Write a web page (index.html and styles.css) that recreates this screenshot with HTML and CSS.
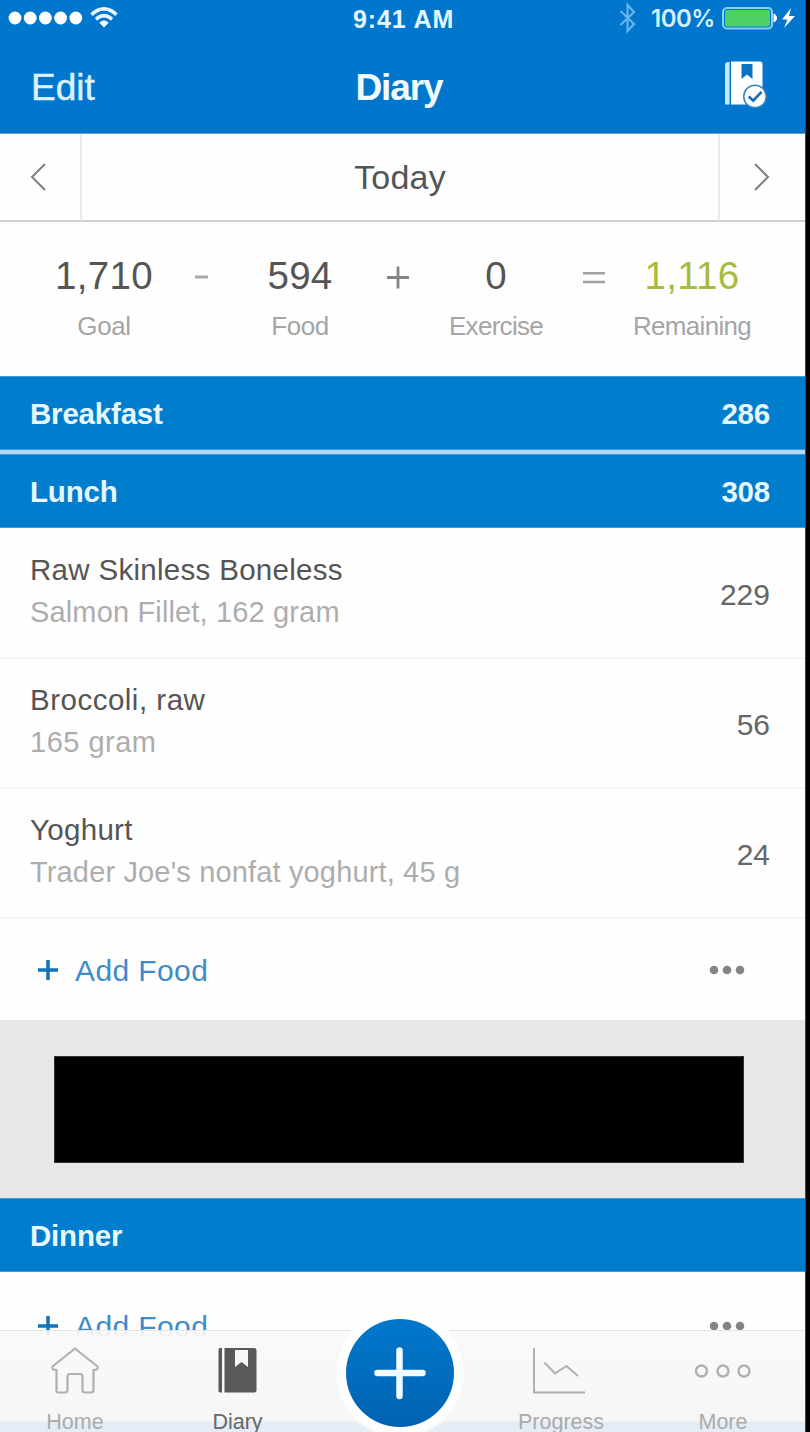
FILE: index.html
```html
<!DOCTYPE html>
<html lang="en">
<head>
<meta charset="utf-8">
<title>Diary</title>
<link rel="stylesheet" href="styles.css">
</head>
<body>
<div class="phone">
  <header class="top">
    <div class="status">
      <div class="signal">
        <svg width="76" height="36" viewBox="0 0 76 36" fill="#fff"><circle cx="8" cy="18" r="6.4"/><circle cx="23.2" cy="18" r="6.4"/><circle cx="38.4" cy="18" r="6.4"/><circle cx="53.6" cy="18" r="6.4"/><circle cx="68.8" cy="18" r="6.4"/></svg>
        <svg class="wifi" width="28" height="36" viewBox="0 0 28 36" fill="none" stroke="#e6f5ff" stroke-width="3.6"><path d="M1.500 14.600Q14 3.200 26.500 14.600"/><path d="M6 19.300Q14 12 22 19.300"/><path d="M14 27.500L9.300 22.800Q14 18.200 18.700 22.800Z" fill="#fff" stroke="none"/></svg>
      </div>
      <div class="clock">9:41 AM</div>
      <div class="power">
        <svg width="18" height="36" viewBox="0 0 18 36" fill="none" stroke="#68b5ea" stroke-width="2.100"><path d="M1.500 11L15 24L8.500 31V5L15 12L1.500 25"/></svg>
        <span class="percent">100%</span>
        <svg class="battery" width="74" height="36" viewBox="0 0 74 36"><rect x="1" y="8" width="49" height="20.500" rx="4" fill="#0077cc" stroke="#8bd0f2" stroke-width="2"/><rect x="3" y="10" width="45" height="16.500" rx="2" fill="#4cd068"/><path d="M51.500 13.500Q55 15 55 18T51.500 22.500Z" fill="#fff"/><path d="M69 8L60 19.500H65.500L62 28L73 16H67Z" fill="#fff"/></svg>
      </div>
    </div>
    <div class="nav">
      <span class="edit">Edit</span>
      <span class="title">Diary</span>
      <svg class="complete" width="44" height="50" viewBox="0 0 44 50"><path d="M3 2Q1 2.500 1 4.500V44.500H5.500V2Z" fill="#c4eaff"/><path d="M7 1.500H36Q38.500 1.500 38.500 4V44.500H7Z" fill="#fff"/><path d="M17.500 4H28.500V19L23 14.500L17.500 19Z" fill="#0873c2"/><circle cx="31" cy="36.500" r="12" fill="#2e83bd"/><circle cx="31" cy="36.500" r="10.500" fill="#fff"/><path d="M24.700 36.500L29.300 40.700L37.500 31.800" fill="none" stroke="#176eb0" stroke-width="2.700"/></svg>
    </div>
  </header>

  <div class="datebar">
    <div class="prev"><svg width="16" height="28" viewBox="0 0 16 28"><path d="M15 1L2 14L15 27"/></svg></div>
    <div class="day">Today</div>
    <div class="next"><svg width="16" height="28" viewBox="0 0 16 28"><path d="M1 1L14 14L1 27"/></svg></div>
  </div>

  <section class="summary">
    <div class="stat"><div class="num">1,710</div><div class="cap">Goal</div></div>
    <svg class="op" width="24" height="24" viewBox="0 0 24 24" stroke="#a8a8a8" stroke-width="3"><path d="M5 12H18"/></svg>
    <div class="stat"><div class="num">594</div><div class="cap">Food</div></div>
    <svg class="op" width="24" height="24" viewBox="0 0 24 24" stroke="#858585" stroke-width="2.800"><path d="M1 12.500H23M12 1.500V23.500"/></svg>
    <div class="stat"><div class="num">0</div><div class="cap tight">Exercise</div></div>
    <svg class="op" width="24" height="24" viewBox="0 0 24 24" stroke="#a0a0a0" stroke-width="2.600"><path d="M1 8.300H23M1 17H23"/></svg>
    <div class="stat"><div class="num left">1,116</div><div class="cap tight">Remaining</div></div>
  </section>

  <div class="meal"><span>Breakfast</span><span>286</span></div>
  <div class="seam"></div>
  <div class="meal"><span>Lunch</span><span>308</span></div>
  <div class="item first"><div class="food"><div class="name">Raw Skinless Boneless</div><div class="detail">Salmon Fillet, 162 gram</div></div><div class="kcal">229</div></div>
  <div class="item"><div class="food"><div class="name wide">Broccoli, raw</div><div class="detail wide">165 gram</div></div><div class="kcal">56</div></div>
  <div class="item"><div class="food"><div class="name">Yoghurt</div><div class="detail">Trader Joe's nonfat yoghurt, 45 g</div></div><div class="kcal">24</div></div>
  <div class="add">
    <svg width="22" height="22" viewBox="0 0 22 22" stroke="#1373bd" stroke-width="3.600"><path d="M1 11H21M11 1V21"/></svg>
    <span>Add Food</span>
    <svg class="dots" width="36" height="12" viewBox="0 0 36 12" fill="#858585"><circle cx="5" cy="6" r="4.300"/><circle cx="18" cy="6" r="4.300"/><circle cx="31" cy="6" r="4.300"/></svg>
  </div>
  <div class="banner"><div class="ad"></div></div>
  <div class="meal"><span>Dinner</span></div>
  <div class="add second">
    <svg width="22" height="22" viewBox="0 0 22 22" stroke="#1373bd" stroke-width="3.600"><path d="M1 11H21M11 1V21"/></svg>
    <span>Add Food</span>
    <svg class="dots" width="36" height="12" viewBox="0 0 36 12" fill="#858585"><circle cx="5" cy="6" r="4.300"/><circle cx="18" cy="6" r="4.300"/><circle cx="31" cy="6" r="4.300"/></svg>
  </div>

  <nav class="tabs">
    <div class="tab"><svg width="52" height="50" viewBox="0 0 52 50" fill="none" stroke="#b0b0b0" stroke-width="2.200" stroke-linejoin="round"><path d="M26 2.500L3.500 20.500Q2 24 7.500 24V44.500Q7.500 46.500 9.500 46.500H16Q18.500 46.500 18.500 44V31Q18.500 28 21 28H31Q33.500 28 33.500 31V44Q33.500 46.500 36 46.500H42Q44.500 46.500 44.500 44V24Q50 24 48.500 20.500Z"/></svg><span>Home</span></div>
    <div class="tab active"><svg width="40" height="50" viewBox="0 0 40 50" fill="#595959"><path d="M2 2H4V46.500H2Q.5 46.500 .5 44.500V4Q.5 2 2 2Z"/><path d="M6.500 2H36Q38.500 2 38.500 4V44.500Q38.500 46.500 36 46.500H6.500Z"/><path d="M17 4H30V21L23.500 16L17 21Z" fill="#f8f8f7"/></svg><span>Diary</span></div>
    <div class="gap"></div>
    <div class="tab"><svg class="chart" width="54" height="50" viewBox="0 0 54 50" fill="none" stroke="#b0b0b0" stroke-width="2"><path d="M2 2V46.500H53"/><path d="M12.500 16.500L23 27.500L34.500 20L46 30"/></svg><span>Progress</span></div>
    <div class="tab"><svg width="56" height="50" viewBox="0 0 56 50" fill="none" stroke="#b0b0b0" stroke-width="2.400"><circle cx="6.500" cy="25" r="5.500"/><circle cx="28" cy="25" r="5.500"/><circle cx="49" cy="25" r="5.500"/></svg><span>More</span></div>
    <div class="fab"><svg width="108" height="108" viewBox="0 0 108 108" stroke="#f2fbff" stroke-width="6.500" stroke-linecap="round"><path d="M31.500 54H76.500M53.500 31.500V77"/></svg></div>
  </nav>
</div>
</body>
</html>
```
FILE: styles.css
```css
* { box-sizing: border-box; }
body { margin: 0; background: #000; font-family: "Liberation Sans", Arial, sans-serif; }
svg { display: block; flex: none; }

.phone { position: relative; width: 806px; height: 1432px; overflow: hidden; background: #fefefe; border-right: 1px solid #444; }

.top { height: 134px; background: #0077cc; color: #f0faff; border-bottom: 1px solid #6a9dc8; }
.status { height: 36px; display: grid; grid-template-columns: 300px 207px 1fr; }
.signal { display: flex; padding-left: 7px; }
.wifi { margin-left: 7px; }
.clock { font: bold 25px/38px "Liberation Sans", Arial, sans-serif; text-align: center; letter-spacing: .9px; white-space: nowrap; color: #e6f6ff; }
.power { display: flex; padding-left: 112px; }
.percent { width: 65px; margin-left: 14px; font: 600 24px/37px Inter, sans-serif; color: #d5efff; letter-spacing: -.5px; white-space: nowrap; }
.battery { margin-left: 6px; }
.nav { display: grid; grid-template-columns: 300px 198px 1fr; height: 97px; font-size: 37px; line-height: 103px; }
.edit { padding-left: 31px; color: #daf1ff; -webkit-text-stroke: .5px #daf1ff; }
.title { text-align: center; font-weight: bold; letter-spacing: -1.1px; }
.complete { margin: 24px 0 0 226px; }

.datebar { display: grid; grid-template-columns: 82px 1fr 87px; height: 88px; border-bottom: 2px solid #cfcfcf; }
.datebar svg { fill: none; stroke: #808080; stroke-width: 2; }
.prev { padding: 29px 0 0 30px; border-right: 2px solid #e9e9e9; }
.day { text-align: center; font-size: 34px; line-height: 87px; color: #555; letter-spacing: .2px; }
.next { padding: 29px 0 0 34px; border-left: 2px solid #e9e9e9; }

.summary { display: grid; grid-template-columns: 138px 24px 138px 24px 138px 24px 138px; justify-content: start; column-gap: 17px; height: 154px; padding: 29px 0 0 35px; }
.summary { grid-template-columns: 138px 24px 138px 24px 138px 24px 138px; }
.stat { text-align: center; }
.num { font-size: 38.5px; line-height: 50px; letter-spacing: .3px; color: #555; }
.left { color: #a5bc3c; }
.cap { font-size: 26px; line-height: 51px; color: #a5a5a5; letter-spacing: -.4px; }
.tight { letter-spacing: -.7px; }
.op { margin-top: 14px; }

.meal { display: flex; justify-content: space-between; height: 74px; padding: 0 35px 0 30px; background: #007ecd; border-top: 1px solid #3e9ddb; border-bottom: 1px solid #3e9ddb; color: #e6f7ff; font-size: 29.5px; font-weight: bold; line-height: 73px; letter-spacing: -.2px; }
.seam { height: 4px; background: #b4d9f4; }
.item { display: flex; justify-content: space-between; height: 130px; padding: 20px 35px 0 30px; border-bottom: 2px solid #f5f5f5; white-space: nowrap; }
.first { height: 131px; padding-top: 21px; }
.name { font-size: 29.5px; line-height: 42px; color: #555; letter-spacing: .3px; }
.detail { font-size: 29px; line-height: 42px; color: #adadad; letter-spacing: .15px; }
.wide { letter-spacing: .5px; }
.kcal { padding-top: 25px; font-size: 30px; line-height: 42px; color: #666; }
.add { display: flex; align-items: center; height: 101px; padding: 1px 60px 0 37px; color: #3e8bc9; font-size: 30px; letter-spacing: .4px; }
.add span { margin-left: 16px; line-height: 50px; padding-top: 2px; }
.dots { margin-left: auto; }
.second { padding-top: 7px; }

.banner { height: 178px; padding: 36px 61px 36px 54px; background: #e7e7e7; }
.ad { height: 107px; background: #000; border: 1px solid #333; }

.tabs { position: absolute; left: 0; right: 0; top: 1330px; height: 102px; display: grid; grid-template-columns: 150px 175px 150px 172px 152px; border-top: 1px solid #e4e4e4; background: linear-gradient(rgba(249,249,248,.88) 0, #f9f9f8 9px, #f6f6f6 90px, #e4edf5 91px); }
.tab { display: flex; flex-direction: column; align-items: center; padding-top: 15px; color: #ababab; font-size: 21.5px; line-height: 20px; }
.tab span { margin-top: 16px; }
.chart { margin-left: -4px; }
.active { color: #686868; }
.fab { position: absolute; left: 335px; top: -23px; width: 130px; height: 130px; padding: 11px; border-radius: 50%; background: radial-gradient(circle, #fff 54px, rgba(255,255,255,.92) 60px, rgba(253,253,253,.75) 64px, rgba(240,240,240,.7) 65px); }
.fab svg { border-radius: 50%; background: linear-gradient(#0078cd, #0062b1); }
```
